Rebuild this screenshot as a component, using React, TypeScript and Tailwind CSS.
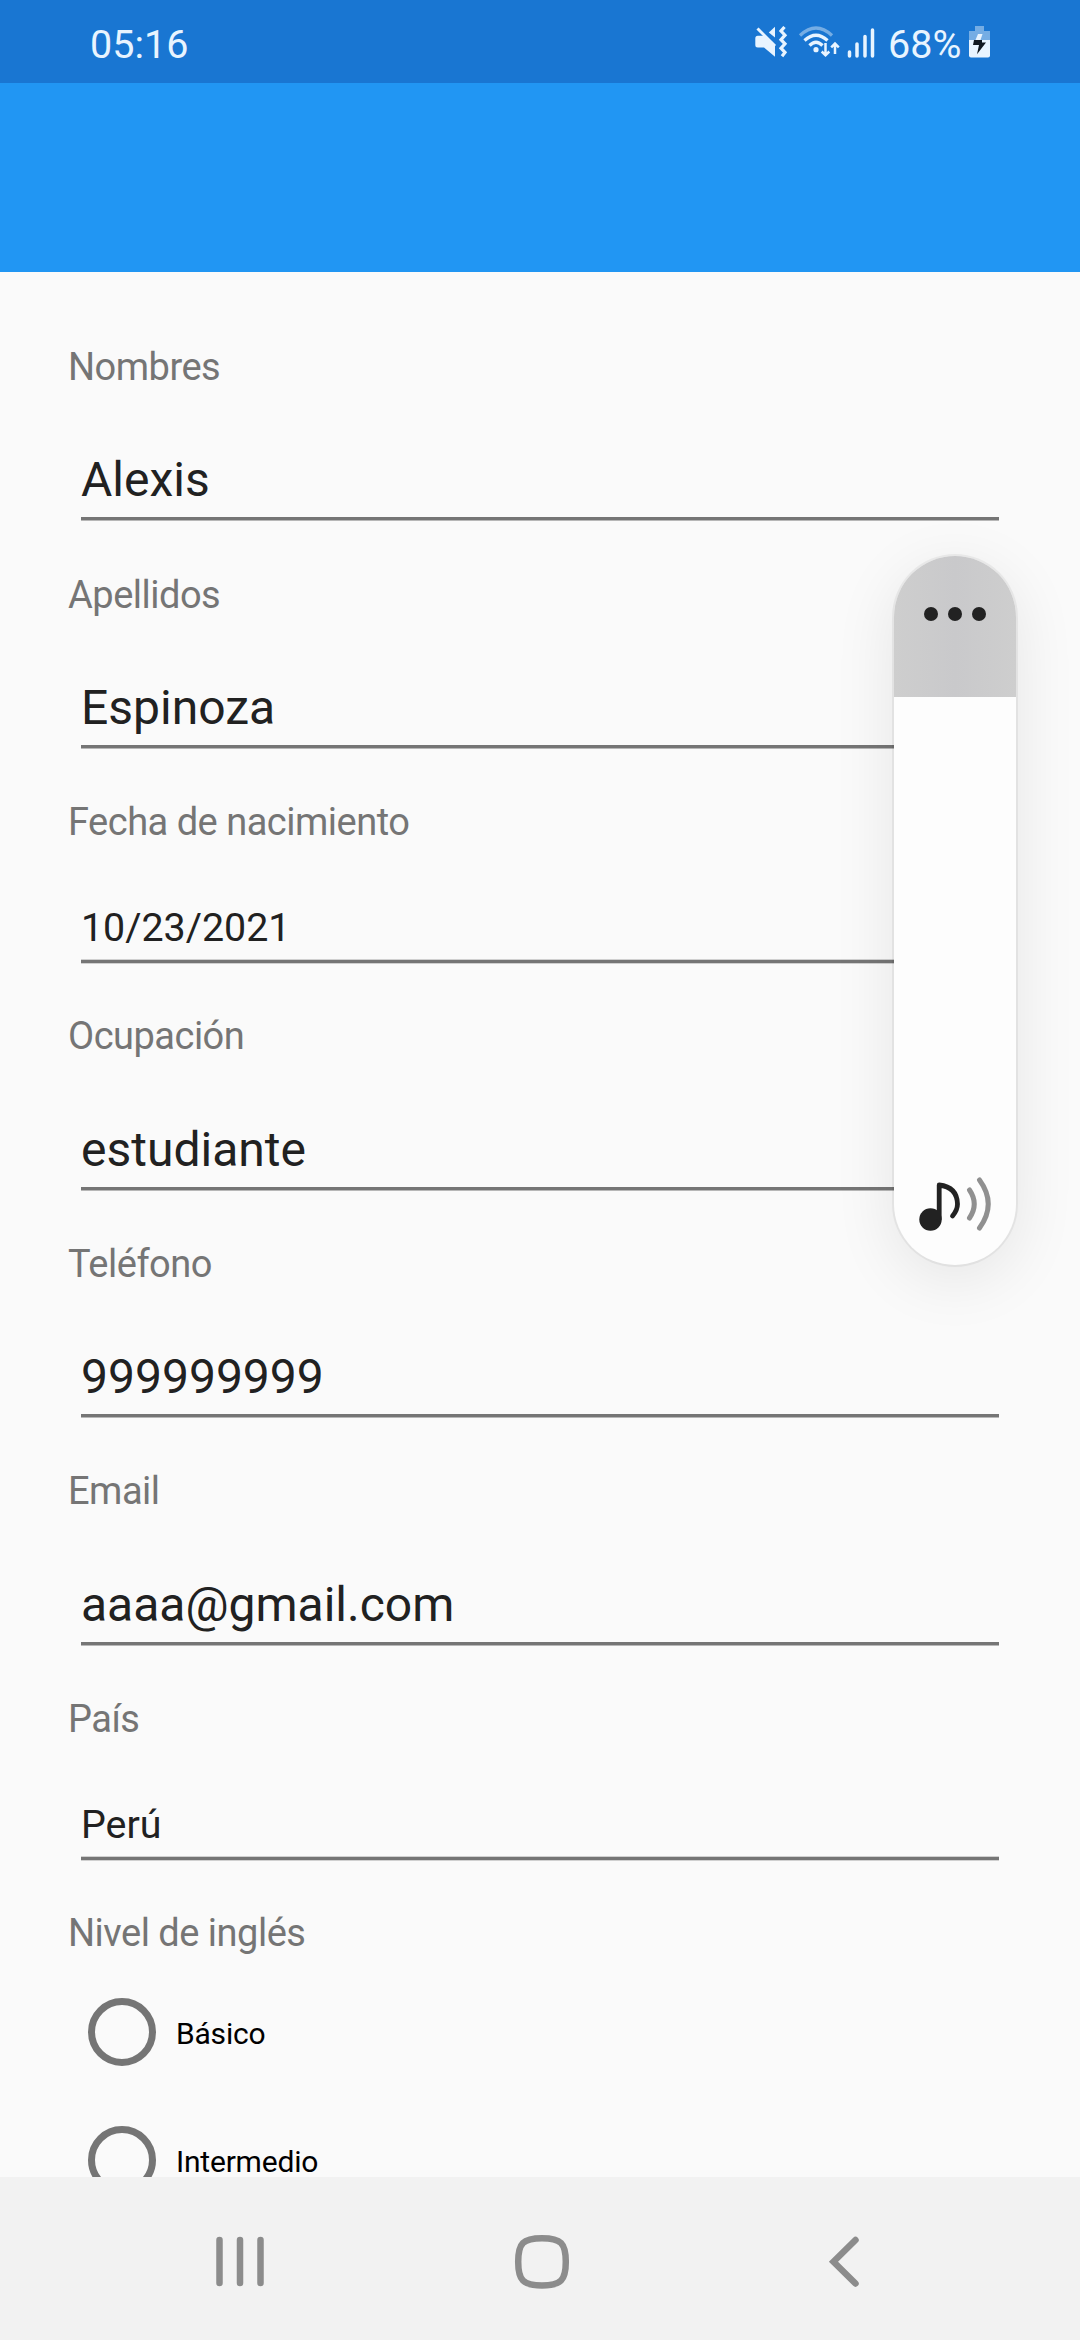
import React from "react";

type Field = { label: string; value: string; small?: boolean; height: string; valueTop: string };

const fields: Field[] = [
  { label: "Nombres", value: "Alexis", height: "h-[228px]", valueTop: "mt-[62px]" },
  { label: "Apellidos", value: "Espinoza", height: "h-[227px]", valueTop: "mt-[62px]" },
  { label: "Fecha de nacimiento", value: "10/23/2021", small: true, height: "h-[214px]", valueTop: "mt-[60px]" },
  { label: "Ocupación", value: "estudiante", height: "h-[228px]", valueTop: "mt-[63px]" },
  { label: "Teléfono", value: "999999999", height: "h-[227px]", valueTop: "mt-[62px]" },
  { label: "Email", value: "aaaa@gmail.com", height: "h-[228px]", valueTop: "mt-[63px]" },
  { label: "País", value: "Perú", small: true, height: "h-[214px]", valueTop: "mt-[60px]" },
];

const labelClass =
  "-ml-[1px] h-[46px] text-[38px] leading-[46px] tracking-[-0.5px] text-[#757575] whitespace-nowrap";

function StatusBar() {
  return (
    <header className="flex h-[83px] shrink-0 items-center justify-between bg-[#1976d2] pl-[90px] pr-[89px] pt-[7px] text-[39.5px] leading-[46px] text-[#e8f4ff]">
      <span>05:16</span>
      <div className="flex items-center">
        <svg className="-mt-[4px] h-[34px] w-[134px]" viewBox="754 26 134 34" fill="none">
          <path d="M755.3 38.2q0-2.500 2.500-2.500h6.500L775 46V56.700L764 47.500h-6.200q-2.500 0-2.500-2.500z" fill="#e8f4ff" />
          <path d="M768.800 32.500L775 26.700V37.500z" fill="#e8f4ff" />
          <path d="M757.500 28.500L775 46" stroke="#e8f4ff" strokeWidth="3" />
          <path d="M784.500 27l-3.500 4 4 4.200-4 4.400 4 4.200-4 4.400 4 4.200-3 3.800" stroke="#e8f4ff" strokeWidth="3.200" />
          <path d="M800 35.500Q816 20.500 832 35.500" stroke="#75ade4" strokeWidth="3.300" />
          <path d="M804.500 40.500Q816 30 827.500 40.500" stroke="#e8f4ff" strokeWidth="3.300" />
          <path d="M809.500 45.500Q816 39 822.500 45.500" stroke="#e8f4ff" strokeWidth="3.300" />
          <circle cx="816" cy="49.700" r="2.600" fill="#e8f4ff" />
          <path d="M825.500 43v12M821.700 51.500l3.800 3.800 3.800-3.800M835 54V43.500M831.200 47.300l3.800-3.800 3.800 3.800" stroke="#e8f4ff" strokeWidth="2.500" />
          <path d="M849.500 52v4M857 44v12M865 36.500v19.500M872.500 30v26" stroke="#e8f4ff" strokeWidth="3.500" strokeLinecap="round" />
        </svg>
        <span className="w-[81px]">68%</span>
        <svg className="-mt-[6px] h-[32px] w-[22px]" viewBox="969 26 22 32">
          <path d="M975 26h9v5h6v9h-21v-9h6z" fill="#75ade4" />
          <path d="M969 40h21v15.500q0 2-2 2h-17q-2 0-2-2z" fill="#e8f4ff" />
          <path d="M978 34h4.500l-2 6h-5z" fill="#e8f4ff" />
          <path d="M974 40h8v2.500h4L977 54.300l2-9.300h-6z" fill="#101820" />
        </svg>
      </div>
    </header>
  );
}

function FormField({ label, value, small, height, valueTop }: Field) {
  return (
    <div className={"flex shrink-0 flex-col " + height}>
      <div className={labelClass}>{label}</div>
      <div
        className={
          (small ? "h-[46px] text-[39.375px] leading-[46px] " : "h-[56px] text-[48px] leading-[56px] ") +
          "ml-[12px] text-[#212121] " +
          valueTop
        }
      >
        {value}
      </div>
      <div
        className={
          (small ? "mt-[8px] h-[5px] border-y border-[#d0d0d0] " : "mt-[9px] h-[4px] border-b border-[#b7b7b7] ") +
          "mx-[12px] shrink-0 bg-[#757575]"
        }
      />
    </div>
  );
}

function Radio({ label }: { label: string }) {
  return (
    <div className="flex h-[128px] shrink-0 items-start pl-[19px]">
      <div className="h-[68px] w-[68px] rounded-full border-[7px] border-[#757575]" />
      <span className="ml-[20px] mt-[20px] text-[30px] leading-[32px] tracking-[-0.2px] text-black">{label}</span>
    </div>
  );
}

function VolumePanel() {
  return (
    <aside className="absolute left-[894px] top-[556px] flex h-[709px] w-[122px] flex-col items-center rounded-full bg-[#fdfdfd] shadow-[0_0_0_2px_rgba(0,0,0,0.05),0_14px_64px_rgba(0,0,0,0.09)]">
      <div className="flex h-[141px] w-full items-start justify-center gap-[10px] rounded-t-[61px] bg-linear-to-r from-[#cecece] via-[#c9c9cb] to-[#cecece] pt-[51px]">
        <i className="size-[14px] rounded-full bg-[#222]" />
        <i className="size-[14px] rounded-full bg-[#222]" />
        <i className="size-[14px] rounded-full bg-[#222]" />
      </div>
      <svg className="mt-auto mb-[33px] h-[56px] w-[74px]" viewBox="918 1176 74 56" fill="none" strokeLinecap="round">
        <circle cx="930.500" cy="1219.500" r="11.200" fill="#222" />
        <path d="M939.200 1219V1185Q957 1187 957.500 1204Q957.500 1210 952.500 1216" stroke="#222" strokeWidth="4.800" strokeLinejoin="round" />
        <path d="M969.500 1190Q979 1204 969.500 1218M979.500 1180Q997 1204 979.500 1228" stroke="#909090" strokeWidth="5" />
      </svg>
    </aside>
  );
}

function NavBar() {
  return (
    <nav className="flex h-[163px] shrink-0 items-start bg-[#f2f2f2] pl-[214px] pt-[56px]">
      <svg className="h-[56px] w-[52px]" viewBox="214 2233 52 56" stroke="#8c8c8c" strokeWidth="6.500" strokeLinecap="round">
        <path d="M219.500 2240v43M240 2240v43M260.500 2240v43" />
      </svg>
      <svg className="ml-[248px] h-[56px] w-[56px]" viewBox="514 2233 56 56" fill="none" stroke="#8c8c8c" strokeWidth="6.500">
        <path d="M542 2238.200c19 0 23.800 5 23.800 23.600s-4.800 23.600-23.800 23.600-23.800-5-23.800-23.600 4.800-23.600 23.800-23.600z" />
      </svg>
      <svg className="ml-[256px] h-[56px] w-[40px]" viewBox="826 2233 40 56" fill="none" stroke="#8c8c8c" strokeWidth="6.500" strokeLinecap="round">
        <path d="M855.500 2240L833.500 2261.800L855.500 2283.500" />
      </svg>
    </nav>
  );
}

export default function App() {
  return (
    <div className="relative flex h-[2340px] w-[1080px] flex-col overflow-hidden bg-[#fafafa] font-['Roboto',sans-serif]">
      <StatusBar />
      <div className="h-[189px] shrink-0 bg-[#2196f3]" />
      <main className="flex min-h-0 flex-1 flex-col overflow-hidden px-[69px] pt-[72px]">
        {fields.map((f) => (
          <FormField key={f.label} {...f} />
        ))}
        <div className={labelClass + " shrink-0"}>Nivel de inglés</div>
        <div className="mt-[42px] flex flex-col">
          <Radio label="Básico" />
          <Radio label="Intermedio" />
        </div>
      </main>
      <NavBar />
      <VolumePanel />
    </div>
  );
}
